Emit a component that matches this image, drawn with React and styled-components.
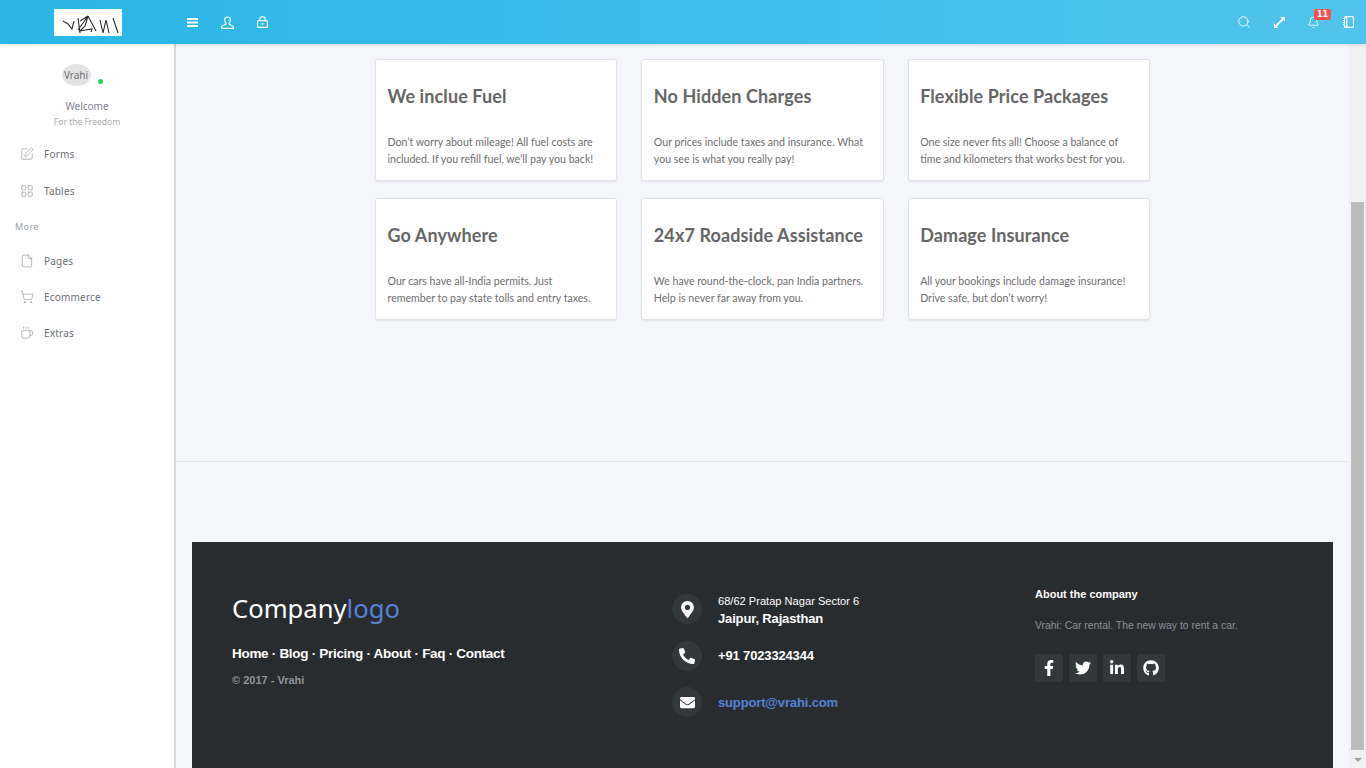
import React from "react";
import styled, { createGlobalStyle } from "styled-components";
import { FaMapMarkerAlt, FaPhone, FaEnvelope, FaFacebookF, FaTwitter, FaLinkedinIn, FaGithub } from "react-icons/fa";
import { Search, Bell, SquarePen, LayoutGrid, File, ShoppingCart, Coffee } from "lucide-react";

const GlobalStyle = createGlobalStyle`
  html, body {
    margin: 0;
    height: 100%;
    overflow: hidden;
    background: #f4f6fb;
  }
  * { box-sizing: border-box; }
`;

const features = [
  ["We inclue Fuel", "Don’t worry about mileage! All fuel costs are", "included. If you refill fuel, we’ll pay you back!"],
  ["No Hidden Charges", "Our prices include taxes and insurance. What", "you see is what you really pay!"],
  ["Flexible Price Packages", "One size never fits all! Choose a balance of", "time and kilometers that works best for you."],
  ["Go Anywhere", "Our cars have all-India permits. Just", "remember to pay state tolls and entry taxes."],
  ["24x7 Roadside Assistance", "We have round-the-clock, pan India partners.", "Help is never far away from you."],
  ["Damage Insurance", "All your bookings include damage insurance!", "Drive safe, but don’t worry!"],
];

function BarsIcon() {
  return (
    <svg width="11" height="9" viewBox="0 0 11 9" fill="#fff">
      <rect width="11" height="2" />
      <rect y="3.5" width="11" height="2" />
      <rect y="7" width="11" height="2" />
    </svg>
  );
}

function UserIcon() {
  return (
    <svg width="13" height="13" viewBox="0 0 13 13" fill="none" stroke="#fff" strokeWidth="1.1">
      <path d="M6.5 1C4.6 1 3.6 2.3 3.6 4c0 1.4.6 2.4 1.2 3 .3.5.2 1.2-.4 1.5L1.7 9.8c-.7.3-1.1.9-1.1 1.7v.9h11.8v-.9c0-.8-.4-1.4-1.1-1.7L8.6 8.5c-.6-.3-.7-1-.4-1.5.6-.6 1.2-1.6 1.2-3 0-1.7-1-3-2.9-3z" />
    </svg>
  );
}

function LockIcon() {
  return (
    <svg width="11" height="12" viewBox="0 0 11 12" fill="none" stroke="#fff" strokeWidth="1.1">
      <rect x="0.6" y="4.6" width="9.8" height="6.8" rx="1" />
      <path d="M2.8 4.6V3.2C2.8 1.6 3.9.6 5.5.6s2.7 1 2.7 2.6v1.4" />
      <path d="M5.5 7v2" strokeWidth="1.6" />
    </svg>
  );
}

function ExpandIcon() {
  return (
    <svg width="11" height="11" viewBox="0 0 12 12" fill="#fff">
      <path d="M7 0h5v5l-1.7-1.7L8 5.6 6.4 4l2.3-2.3zM0 12V7l1.7 1.7L4 6.4 5.6 8l-2.3 2.3L5 12z" />
      <path d="M3.5 7.2l3.7-3.7 1.3 1.3-3.7 3.7z" />
    </svg>
  );
}

function NotebookIcon() {
  return (
    <svg width="11" height="12" viewBox="0 0 11 12" fill="none" stroke="#fff" strokeWidth="1.1">
      <rect x="1.6" y="0.6" width="8.8" height="10.8" rx="1" />
      <path d="M3.8.6v10.8" />
      <path d="M0 2.5h2M0 4.5h2M0 6.5h2M0 8.5h2" />
    </svg>
  );
}

function SignatureLogo() {
  return (
    <svg width="68" height="27" viewBox="0 0 68 27" fill="none" stroke="#2b2b2b" strokeWidth="1.1">
      <path d="M9 12l5 3 4 5 2-8M24 9l2 15M26 12l8-5-10 14M34 7l-3 10-5 5 12-2-1 3M34 7l8 15M46 11l3 13 3-13 3 13M59 9l5 15" />
    </svg>
  );
}

function App() {
  return (
    <>
      <GlobalStyle />
      <Page>
        <TopBar>
          <Brand>
            <LogoBox>
              <SignatureLogo />
            </LogoBox>
          </Brand>
          <TopIcons>
            <TopIcon><BarsIcon /></TopIcon>
            <TopIcon><UserIcon /></TopIcon>
            <TopIcon><LockIcon /></TopIcon>
          </TopIcons>
          <TopRight>
            <RightIcon><Search size={14} strokeWidth={1.6} /></RightIcon>
            <RightIcon><ExpandIcon /></RightIcon>
            <RightIcon $shift={-1}>
              <Bell size={13} strokeWidth={1.6} />
              <Badge>11</Badge>
            </RightIcon>
            <RightIcon $shift={-1}><NotebookIcon /></RightIcon>
          </TopRight>
        </TopBar>
        <Body>
          <Sidebar>
            <Profile>
              <AvatarRow>
                <Avatar>Vrahi</Avatar>
                <OnlineDot />
              </AvatarRow>
              <Welcome>Welcome</Welcome>
              <Tagline>For the Freedom</Tagline>
            </Profile>
            <NavItem $h={37}><SquarePen size={14} strokeWidth={1} />Forms</NavItem>
            <NavItem $h={37}><LayoutGrid size={14} strokeWidth={1} />Tables</NavItem>
            <NavHeading>More</NavHeading>
            <NavItem $h={36}><File size={14} strokeWidth={1} />Pages</NavItem>
            <NavItem $h={36}><ShoppingCart size={14} strokeWidth={1} />Ecommerce</NavItem>
            <NavItem $h={36}><Coffee size={14} strokeWidth={1} />Extras</NavItem>
          </Sidebar>
          <Main>
            <CardGrid>
              {features.map(([title, line1, line2]) => (
                <Card key={title}>
                  <CardTitle>{title}</CardTitle>
                  <CardText>{line1}<br />{line2}</CardText>
                </Card>
              ))}
            </CardGrid>
            <Divider />
            <Footer>
              <FooterLeft>
                <CompanyLogo>Company<span>logo</span></CompanyLogo>
                <FooterLinks>Home · Blog · Pricing · About · Faq · Contact</FooterLinks>
                <Copyright>© 2017 - Vrahi</Copyright>
              </FooterLeft>
              <FooterCenter>
                <ContactRow>
                  <ContactIcon><FaMapMarkerAlt size={17} /></ContactIcon>
                  <ContactText $pad={4}><small>68/62 Pratap Nagar Sector 6</small>Jaipur, Rajasthan</ContactText>
                </ContactRow>
                <ContactRow>
                  <ContactIcon><FaPhone size={16} style={{ transform: "scaleX(-1)" }} /></ContactIcon>
                  <ContactText>+91 7023324344</ContactText>
                </ContactRow>
                <ContactRow>
                  <ContactIcon><FaEnvelope size={15} /></ContactIcon>
                  <ContactLink>support@vrahi.com</ContactLink>
                </ContactRow>
              </FooterCenter>
              <FooterRight>
                <AboutTitle>About the company</AboutTitle>
                <AboutText>Vrahi: Car rental. The new way to rent a car.</AboutText>
                <Socials>
                  <Social><FaFacebookF size={16} /></Social>
                  <Social><FaTwitter size={16} /></Social>
                  <Social><FaLinkedinIn size={16} /></Social>
                  <Social><FaGithub size={16} /></Social>
                </Socials>
              </FooterRight>
            </Footer>
          </Main>
          <ScrollBar>
            <ScrollThumb />
            <ScrollArrow />
          </ScrollBar>
        </Body>
      </Page>
    </>
  );
}

const Page = styled.div`
  height: 100vh;
  display: flex;
  flex-direction: column;
  overflow: hidden;
`;
const TopBar = styled.header`
  height: 44px;
  flex: none;
  display: flex;
  align-items: center;
  background: linear-gradient(to right, #29b6e6, #50c4ec);
  box-shadow: 0 1px 4px rgba(0, 0, 0, 0.12);
  position: relative;
  z-index: 2;
`;
const Brand = styled.div`
  width: 176px;
  display: flex;
  padding-left: 54px;
`;
const LogoBox = styled.div`
  width: 68px;
  height: 27px;
  background: #fff;
  display: flex;
`;
const TopIcons = styled.div`
  display: flex;
  gap: 21px;
  padding-left: 9px;
  color: #fff;
`;
const TopIcon = styled.span`
  width: 14px;
  height: 14px;
  display: flex;
  align-items: center;
  justify-content: center;
`;
const TopRight = styled.div`
  margin-left: auto;
  display: flex;
  gap: 21px;
  padding-right: 10px;
  color: #fff;
`;
const RightIcon = styled.span`
  position: relative;
  left: ${(p) => p.$shift || 0}px;
  width: 14px;
  height: 14px;
  display: flex;
  align-items: center;
  justify-content: center;
`;
const Badge = styled.span`
  position: absolute;
  top: -6px;
  left: 8px;
  width: 17px;
  height: 11px;
  border-radius: 2px;
  background: #f25252;
  color: #fff;
  font: bold 8px/11px "DejaVu Sans", sans-serif;
  text-align: center;
`;
const Body = styled.div`
  flex: 1;
  min-height: 0;
  display: flex;
`;
const Sidebar = styled.aside`
  width: 176px;
  flex: none;
  background: #fff;
  border-right: 2px solid #d6d6d6;
  font-family: "Noto Sans", sans-serif;
`;
const Profile = styled.div`
  display: flex;
  flex-direction: column;
  align-items: center;
  padding-top: 20px;
  margin-bottom: 6px;
`;
const AvatarRow = styled.div`
  position: relative;
  display: flex;
  padding-right: 22px;
`;
const Avatar = styled.div`
  width: 29px;
  height: 22px;
  border-radius: 50%;
  background: #e3e3e3;
  color: #6f7378;
  font-size: 10px;
  line-height: 22px;
  text-align: center;
`;
const OnlineDot = styled.span`
  position: absolute;
  left: 36px;
  top: 15px;
  width: 5px;
  height: 5px;
  border-radius: 50%;
  background: #2ecc55;
`;
const Welcome = styled.div`
  margin-top: 12px;
  font-size: 10px;
  line-height: 16px;
  color: #7f8491;
`;
const Tagline = styled.div`
  margin-top: 1px;
  font-size: 8.5px;
  line-height: 14px;
  color: #a9abae;
`;
const NavItem = styled.div`
  height: ${(p) => p.$h}px;
  display: flex;
  align-items: center;
  gap: 10px;
  padding-left: 20px;
  font-size: 10px;
  color: #6b6f76;
  letter-spacing: 0.2px;
  svg { color: #85888c; }
`;
const NavHeading = styled.div`
  height: 34px;
  display: flex;
  align-items: center;
  padding-left: 15px;
  font-size: 9px;
  color: #9aa3ad;
  letter-spacing: 0.4px;
`;
const Main = styled.main`
  flex: 1;
  min-width: 0;
  display: flex;
  flex-direction: column;
  padding-top: 15px;
  overflow: hidden;
`;
const CardGrid = styled.section`
  width: 775px;
  margin: 0 auto;
  display: grid;
  grid-template-columns: repeat(3, 1fr);
  column-gap: 24px;
  row-gap: 17px;
`;
const Card = styled.article`
  height: 122px;
  padding: 26px 11.5px 0;
  background: #fff;
  border: 1px solid #e2e3e6;
  border-radius: 3px;
  box-shadow: 0 1px 2px rgba(0, 0, 0, 0.08);
  font-family: "Lato", sans-serif;
`;
const CardTitle = styled.h3`
  margin: 0;
  height: 20px;
  font-size: 18px;
  line-height: 20px;
  font-weight: 700;
  color: #666;
  letter-spacing: 0.1px;
  white-space: nowrap;
`;
const CardText = styled.p`
  margin: 28px 0 0;
  font-size: 10.6px;
  line-height: 17px;
  color: #6e6e6e;
  white-space: nowrap;
`;
const Divider = styled.div`
  flex: none;
  height: 1px;
  margin-top: 141px;
  background: #e4e6ea;
`;
const Footer = styled.footer`
  flex: 1;
  margin: 80px 16px 0;
  padding: 45px 40px 0;
  display: grid;
  grid-template-columns: 440px 363px 1fr;
  background: #292c2f;
  font-family: "Liberation Sans", sans-serif;
`;
const FooterLeft = styled.div`
  padding-top: 5px;
`;
const CompanyLogo = styled.div`
  font-family: "Noto Sans", sans-serif;
  font-size: 25.6px;
  line-height: 34px;
  color: #fff;
  span { color: #5383d3; }
`;
const FooterLinks = styled.div`
  margin-top: 19px;
  font-size: 13.5px;
  line-height: 18px;
  font-weight: 700;
  letter-spacing: -0.3px;
  color: #fff;
`;
const Copyright = styled.div`
  margin-top: 10px;
  font-size: 11px;
  line-height: 14px;
  font-weight: 700;
  color: #8f9296;
`;
const FooterCenter = styled.div`
  display: flex;
  flex-direction: column;
  gap: 16.5px;
  padding-top: 7px;
`;
const ContactRow = styled.div`
  height: 30px;
  display: flex;
  align-items: center;
  gap: 16px;
`;
const ContactIcon = styled.span`
  width: 30px;
  height: 30px;
  flex: none;
  border-radius: 50%;
  background: #33383b;
  color: #fff;
  display: flex;
  align-items: center;
  justify-content: center;
`;
const ContactText = styled.div`
  padding-top: ${(p) => p.$pad || 0}px;
  font-size: 13px;
  line-height: 18px;
  font-weight: 700;
  letter-spacing: -0.15px;
  color: #fff;
  small {
    display: block;
    font-size: 11.1px;
    font-weight: 400;
    letter-spacing: 0;
    line-height: 14px;
    margin-bottom: 2px;
  }
`;
const ContactLink = styled.div`
  font-size: 13px;
  font-weight: 700;
  letter-spacing: -0.15px;
  color: #5383d3;
`;
const FooterRight = styled.div``;
const AboutTitle = styled.div`
  font-size: 11px;
  line-height: 14px;
  font-weight: 700;
  color: #fff;
`;
const AboutText = styled.div`
  margin-top: 18px;
  font-size: 10.4px;
  line-height: 14px;
  color: #8a9099;
`;
const Socials = styled.div`
  margin-top: 21px;
  display: flex;
  gap: 6px;
`;
const Social = styled.span`
  width: 28px;
  height: 28px;
  border-radius: 2px;
  background: #33383b;
  color: #fff;
  display: flex;
  align-items: center;
  justify-content: center;
`;
const ScrollBar = styled.div`
  width: 17px;
  flex: none;
  position: relative;
  background: #f1f1f1;
`;
const ScrollThumb = styled.div`
  position: absolute;
  top: 158px;
  left: 2px;
  width: 13px;
  height: 548px;
  background: #bcbcbc;
`;
const ScrollArrow = styled.div`
  position: absolute;
  bottom: 6px;
  left: 5px;
  border-left: 4px solid transparent;
  border-right: 4px solid transparent;
  border-top: 4px solid #a3a3a3;
`;

export default App;
